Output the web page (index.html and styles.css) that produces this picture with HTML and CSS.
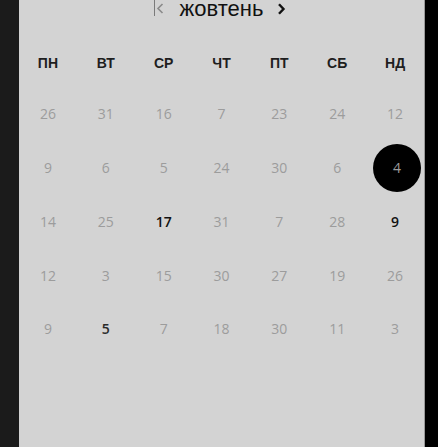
FILE: index.html
```html
<!DOCTYPE html>
<html lang="uk">
<head>
<meta charset="utf-8">
<link rel="stylesheet" href="styles.css">
</head>
<body>
<div class="screen">
  <div class="side-left"></div>
  <div class="panel">
    <div class="header">
      <div class="nav-prev">
        <span class="caret"></span>
        <svg class="chev" width="8" height="11" viewBox="0 0 8 11"><path d="M6.5 1 L2 5.5 L6.5 10" fill="none" stroke="#8a8a8a" stroke-width="1.6"/></svg>
      </div>
      <div class="title">жовтень</div>
      <div class="nav-next">
        <svg class="chev" width="9" height="12" viewBox="0 0 9 12"><path d="M2 1.2 L6.5 6 L2 10.8" fill="none" stroke="#111" stroke-width="2.4"/></svg>
      </div>
    </div>
    <div class="weekdays">
      <div>ПН</div><div>ВТ</div><div>СР</div><div>ЧТ</div><div>ПТ</div><div>СБ</div><div>НД</div>
    </div>
    <div class="days">
      <div class="day">26</div><div class="day">31</div><div class="day">16</div><div class="day">7</div><div class="day">23</div><div class="day">24</div><div class="day">12</div>
      <div class="day">9</div><div class="day">6</div><div class="day">5</div><div class="day">24</div><div class="day">30</div><div class="day">6</div><div class="day"><span class="selected">4</span></div>
      <div class="day">14</div><div class="day">25</div><div class="day strong">17</div><div class="day">31</div><div class="day">7</div><div class="day">28</div><div class="day strong">9</div>
      <div class="day">12</div><div class="day">3</div><div class="day">15</div><div class="day">30</div><div class="day">27</div><div class="day">19</div><div class="day">26</div>
      <div class="day">9</div><div class="day medium">5</div><div class="day">7</div><div class="day">18</div><div class="day">30</div><div class="day">11</div><div class="day">3</div>
    </div>
  </div>
  <div class="side-right"></div>
</div>
</body>
</html>
```

FILE: styles.css
```css
html, body {
  margin: 0;
  padding: 0;
  background: #000;
}
.screen {
  display: flex;
  width: 438px;
  height: 447px;
  overflow: hidden;
}
.side-left {
  width: 19px;
  flex: none;
  background: #1b1b1b;
}
.panel {
  width: 405px;
  flex: none;
  background: #d3d3d3;
  border-right: 1px solid #9a9a9a;
  display: flex;
  flex-direction: column;
}
.side-right {
  flex: 1;
  background: #000;
}
.header {
  display: grid;
  grid-template-columns: 1fr auto 1fr;
  align-items: start;
  height: 41px;
  margin-top: -2px;
}
.nav-prev {
  justify-self: end;
  display: flex;
  align-items: flex-start;
  margin-right: 16px;
  padding-top: 2px;
}
.caret {
  width: 1px;
  height: 18px;
  background: #7a7a7a;
  margin-top: -2px;
  margin-right: 1px;
}
.chev {
  display: block;
  margin-top: 3px;
}
.nav-next {
  justify-self: start;
  margin-left: 14px;
  padding-top: 2px;
}
.title {
  font-family: "Liberation Sans", Arial, sans-serif;
  font-size: 22px;
  line-height: 22px;
  color: #111;
}
.weekdays {
  display: grid;
  grid-template-columns: repeat(7, 1fr);
  height: 48px;
  align-items: center;
  justify-items: center;
  font-family: "Liberation Sans", Arial, sans-serif;
  font-weight: bold;
  font-size: 14px;
  color: #1e1e1e;
}
.days {
  display: grid;
  grid-template-columns: repeat(7, 1fr);
  grid-auto-rows: 53.75px;
  font-family: "Open Sans", "Noto Sans", sans-serif;
  font-size: 14px;
  color: #9c9c9c;
}
.day {
  display: flex;
  align-items: center;
  justify-content: center;
}
.day.strong {
  color: #111;
  font-weight: 600;
}
.day.medium {
  color: #2a2a2a;
  font-weight: 600;
}
.selected {
  width: 48px;
  height: 48px;
  border-radius: 50%;
  background: #000;
  color: #9c9c9c;
  display: flex;
  align-items: center;
  justify-content: center;
  margin-left: 4px;
}
```
